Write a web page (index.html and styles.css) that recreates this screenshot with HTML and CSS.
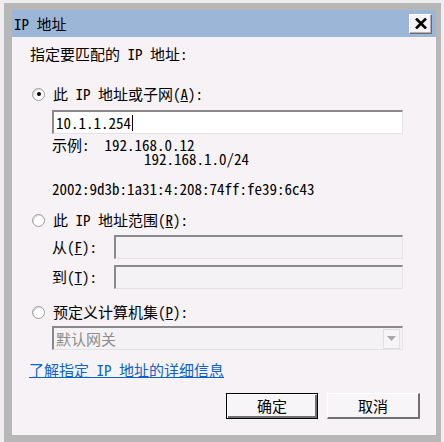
FILE: index.html
```html
<!DOCTYPE html>
<html lang="zh-CN">
<head>
<meta charset="utf-8">
<title>IP 地址</title>
<link rel="stylesheet" href="styles.css">
</head>
<body>
<div class="frame">
  <div class="titlebar">
    <span class="title">IP 地址</span>
    <span class="close"><svg width="12" height="11" viewBox="0 0 12 11"><path d="M1 0.5 L11 10.5 M11 0.5 L1 10.5" stroke="#000" stroke-width="2.6" fill="none"/></svg></span>
  </div>
  <div class="content">
    <div class="label intro">指定要匹配的 IP 地址:</div>

    <div class="radio-row r1"><span class="radio checked"></span><span>此 IP 地址或子网(<u>A</u>):</span></div>
    <div class="field main"><span>10.1.1.254</span><span class="caret"></span></div>
    <div class="examples">
      <div class="ex">示例:  192.168.0.12</div>
      <div class="ex ex2">192.168.1.0/24</div>
    </div>
    <div class="ipv6">2002:9d3b:1a31:4:208:74ff:fe39:6c43</div>

    <div class="radio-row r2"><span class="radio"></span><span>此 IP 地址范围(<u>R</u>):</span></div>
    <div class="range-row first"><span class="range-label">从(<u>F</u>):</span><div class="field disabled grow"></div></div>
    <div class="range-row"><span class="range-label">到(<u>T</u>):</span><div class="field disabled grow"></div></div>

    <div class="radio-row r3"><span class="radio"></span><span>预定义计算机集(<u>P</u>):</span></div>
    <div class="field select disabled"><span class="sel-text">默认网关</span><span class="arrow"><svg width="9" height="5" viewBox="0 0 9 5"><path d="M0 0 H9 L4.5 5 Z" fill="#a8a8a8"/></svg></span></div>

    <a class="link" href="#">了解指定 IP 地址的详细信息</a>

    <div class="buttons">
      <span class="btn default">确定</span>
      <span class="btn">取消</span>
    </div>
  </div>
</div>
</body>
</html>
```

FILE: styles.css
```css
html, body {
  margin: 0;
  padding: 0;
}
body {
  background: #efedef;
  width: 444px;
  height: 442px;
  overflow: hidden;
  font-family: "Noto Sans Mono CJK SC", "Noto Sans CJK SC", monospace;
  font-size: 15px;
  color: #000;
}
.frame {
  margin: 3px 3px 0 4px;
  background: #b7b7b7;
  padding: 7px 5px 7px 8px;
  height: 425px;
}
.titlebar {
  height: 27px;
  background: #9bb6d7;
  display: flex;
  align-items: center;
  justify-content: space-between;
  padding: 0 4px 0 2px;
}
.title {
  line-height: 16px;
  font-size: 15px;
}
.close {
  width: 21px;
  height: 18px;
  background: #f4f2f4;
  border-top: 1px solid #fff;
  border-left: 1px solid #fff;
  border-right: 1px solid #6a6a6a;
  border-bottom: 1px solid #6a6a6a;
  box-shadow: inset -1px -1px 0 #b0b0b0;
  display: flex;
  align-items: center;
  justify-content: center;
  box-sizing: content-box;
}
.content {
  background: #f6f2f6;
  height: 398px;
  padding: 9px 16px 0 18px;
  box-sizing: border-box;
  line-height: 16px;
}
.label { height: 16px; }
.radio-row {
  display: flex;
  align-items: center;
  height: 16px;
  margin-left: 2px;
}
.r1 { margin-top: 24px; }
.r2 { margin-top: 15px; }
.r3 { margin-top: 15px; }
.radio {
  width: 11px;
  height: 11px;
  border-radius: 50%;
  border: 1px solid #9c9c9c;
  background: #fff;
  box-shadow: inset 1px 1px 0 #dcdcdc;
  margin-right: 8px;
  position: relative;
  flex: none;
}
.radio.checked::after {
  content: "";
  position: absolute;
  left: 3.5px;
  top: 3.5px;
  width: 4px;
  height: 4px;
  border-radius: 50%;
  background: #000;
}
.field {
  box-sizing: border-box;
  height: 24px;
  border-top: 2px solid #8a8a8a;
  border-left: 2px solid #8a8a8a;
  border-right: 1px solid #e4e2e4;
  border-bottom: 1px solid #e4e2e4;
  display: flex;
  align-items: center;
}
.field.main {
  margin: 8px 0 0 22px;
  width: 351px;
  background: #fff;
  padding-left: 2px;
}
.caret {
  width: 1px;
  height: 16px;
  background: #000;
  margin-left: 1px;
}
.field.disabled {
  background: #f4f2f4;
}
.examples {
  margin: 4px 0 0 22px;
}
.ex {
  white-space: pre;
  line-height: 14px;
  height: 14px;
}
.ex2 { padding-left: 92px; }
.ipv6 {
  margin: 15px 0 0 22px;
}
.range-row {
  display: flex;
  align-items: center;
  margin: 6px 0 0 22px;
  height: 24px;
}
.range-row.first { margin-top: 7px; }
.range-label { width: 62px; flex: none; }
.grow { width: 289px; }
.field.select {
  margin: 6px 0 0 22px;
  width: 351px;
  justify-content: space-between;
  padding-left: 2px;
}
.sel-text { color: #8c8c8c; }
.arrow {
  width: 15px;
  height: 18px;
  margin-right: 2px;
  background: #f6f4f6;
  border: 1px solid #e0dee0;
  display: flex;
  align-items: center;
  justify-content: center;
}
.link {
  display: inline-block;
  margin: 12px 0 0 -1px;
  color: #0a64c8;
  text-decoration: underline;
  line-height: 16px;
}
.buttons {
  display: flex;
  justify-content: flex-end;
  gap: 9px;
  margin-top: 15px;
}
.btn {
  box-sizing: border-box;
  width: 92px;
  height: 26px;
  display: flex;
  align-items: center;
  justify-content: center;
  background: #f7f5f7;
  border-top: 1px solid #fff;
  border-left: 1px solid #fff;
  border-right: 2px solid #707070;
  border-bottom: 2px solid #707070;
  font-family: "Noto Sans CJK SC", sans-serif;
  font-size: 15px;
}
.btn + .btn { width: 93px; }
.btn.default {
  border: 1px solid #000;
  box-shadow: inset 1px 1px 0 #fff, inset -2px -2px 0 #707070;
}
```
